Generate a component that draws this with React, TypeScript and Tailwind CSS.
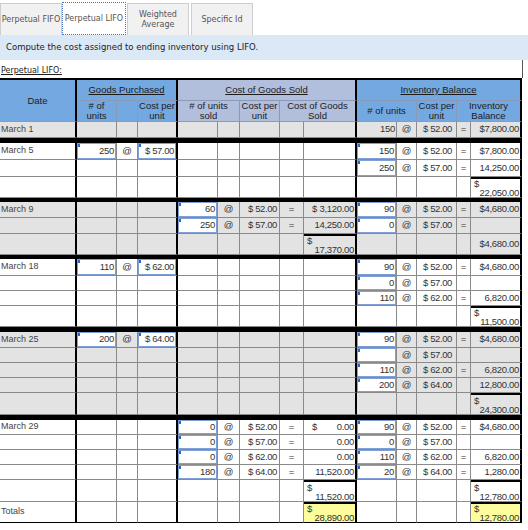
import React from "react";

const GRID =
  "grid grid-cols-[77px_40px_21px_40px_40px_22px_40px_24px_53px_40px_20px_40px_14px_51px]";

type Row = { h: string; cells: string[] };
type Group = { gray: boolean; rows: Row[] };

const E = (n: number) => Array.from({ length: n }, () => "");

const groups: Group[] = [
  {
    gray: true,
    rows: [
      { h: "h-[16px]", cells: ["D:March 1", ...E(8), "R:150", "@", "C:$ 52.00", "=", "R:$7,800.00"] },
    ],
  },
  {
    gray: false,
    rows: [
      { h: "h-[17px]", cells: ["D:March 5", "I:250", "@", "J:$ 57.00", ...E(5), "I:150", "@", "C:$ 52.00", "=", "R:$7,800.00"] },
      { h: "h-[17px]", cells: [...E(9), "I:250", "@", "C:$ 57.00", "=", "R:14,250.00"] },
      { h: "h-[21px]", cells: [...E(13), "T:22,050.00"] },
    ],
  },
  {
    gray: true,
    rows: [
      { h: "h-[16px]", cells: ["D:March 9", "", "", "", "I:60", "@", "C:$ 52.00", "=", "R:$ 3,120.00", "I:90", "@", "C:$ 52.00", "=", "R:$4,680.00"] },
      { h: "h-[16px]", cells: ["", "", "", "", "I:250", "@", "C:$ 57.00", "=", "R:14,250.00", "I:0", "@", "C:$ 57.00", "=", ""] },
      { h: "h-[21px]", cells: [...E(8), "T:17,370.00", "", "", "", "", "R:$4,680.00"] },
    ],
  },
  {
    gray: false,
    rows: [
      { h: "h-[17px]", cells: ["D:March 18", "I:110", "@", "J:$ 62.00", ...E(5), "I:90", "@", "C:$ 52.00", "=", "R:$4,680.00"] },
      { h: "h-[15px]", cells: [...E(9), "I:0", "@", "C:$ 57.00", "", ""] },
      { h: "h-[15px]", cells: [...E(9), "I:110", "@", "C:$ 62.00", "=", "R:6,820.00"] },
      { h: "h-[21px]", cells: [...E(13), "T:11,500.00"] },
    ],
  },
  {
    gray: true,
    rows: [
      { h: "h-[16px]", cells: ["D:March 25", "I:200", "@", "J:$ 64.00", ...E(5), "I:90", "@", "C:$ 52.00", "=", "R:$4,680.00"] },
      { h: "h-[15px]", cells: [...E(9), "I:", "@", "C:$ 57.00", "", ""] },
      { h: "h-[15px]", cells: [...E(9), "I:110", "@", "C:$ 62.00", "=", "R:6,820.00"] },
      { h: "h-[15px]", cells: [...E(9), "I:200", "@", "C:$ 64.00", "", "R:12,800.00"] },
      { h: "h-[22px]", cells: [...E(13), "T:24,300.00"] },
    ],
  },
  {
    gray: false,
    rows: [
      { h: "h-[15px]", cells: ["D:March 29", "", "", "", "I:0", "@", "C:$ 52.00", "=", "S:0.00", "I:90", "@", "C:$ 52.00", "=", "R:$4,680.00"] },
      { h: "h-[15px]", cells: ["", "", "", "", "I:0", "@", "C:$ 57.00", "=", "R:0.00", "I:0", "@", "C:$ 57.00", "", ""] },
      { h: "h-[15px]", cells: ["", "", "", "", "I:0", "@", "C:$ 62.00", "=", "R:0.00", "I:110", "@", "C:$ 62.00", "=", "R:6,820.00"] },
      { h: "h-[15px]", cells: ["", "", "", "", "I:180", "@", "C:$ 64.00", "=", "R:11,520.00", "I:20", "@", "C:$ 64.00", "=", "R:1,280.00"] },
      { h: "h-[22px]", cells: [...E(8), "T:11,520.00", "", "", "", "", "T:12,780.00"] },
      { h: "h-[21px]", cells: ["D:Totals", ...E(7), "Y:28,890.00", "", "", "", "", "Y:12,780.00"] },
    ],
  },
];

const BLACK_COLS = [0, 3, 8, 13];

function CellContent({ s, col }: { s: string; col: number }) {
  if (!s) return null;
  if (s === "@") return <div className="h-full flex items-center justify-center">@</div>;
  if (s === "=") return <div className="h-full flex items-center justify-center">=</div>;
  const k = s.slice(0, 2);
  const v = s.slice(2);
  if (k === "D:")
    return <div className="h-full flex items-center pl-[1px] text-[9px] text-[#444]">{v}</div>;
  if (k === "R:")
    return <div className="h-full flex items-center justify-end pr-[1px] tracking-[-0.3px]">{v}</div>;
  if (k === "C:")
    return (
      <div
        className={`h-full flex items-center justify-end tracking-[-0.4px] whitespace-pre ${
          col === 11 ? "pr-[4px]" : "pr-[2px]"
        }`}
      >
        {v}
      </div>
    );
  if (k === "S:")
    return (
      <div className="h-full flex items-center justify-between pl-[8px] pr-[1px] tracking-[-0.3px]">
        <span>$</span>
        <span>{v}</span>
      </div>
    );
  if (k === "I:" || k === "J:")
    return (
      <div
        className={`relative h-full w-full border border-[#7ea0d6] bg-white flex items-center justify-end pr-[1px] whitespace-pre ${
          k === "J:" ? "tracking-[-0.4px]" : "tracking-[-0.3px]"
        }`}
      >
        <span className="absolute left-0 top-0 w-[2px] h-[3px] bg-[#2a68d0]" />
        {v}
      </div>
    );
  if (k === "T:" || k === "Y:")
    return (
      <div
        className={`h-full border-t-2 border-black flex flex-col justify-center leading-[9px] pl-[3px] pr-[1px] tracking-[-0.3px] ${
          k === "Y:" ? "bg-[#fdfd9e]" : ""
        }`}
      >
        <span>$</span>
        <span className="text-right">{v}</span>
      </div>
    );
  return null;
}

function DataRow({ row, gray, last }: { row: Row; gray: boolean; last: boolean }) {
  return (
    <div className={`${GRID} ${row.h} ${gray ? "bg-[#e3e3e3]" : "bg-white"}`}>
      {row.cells.map((s, i) => (
        <div
          key={i}
          className={`border-b ${last ? "border-b-black" : "border-b-[#8a8a8a]"} ${
            BLACK_COLS.includes(i) ? "border-r-2 border-r-black" : "border-r border-r-[#8a8a8a]"
          } overflow-hidden`}
        >
          <CellContent s={s} col={i} />
        </div>
      ))}
    </div>
  );
}

function Header() {
  const blue = "bg-[#74a8e0]";
  const lav = "bg-[#b1bedc]";
  const b = "border-b border-b-[#8a9ab8]";
  const g = "border-r border-r-[#8a9ab8]";
  const k = "border-r-2 border-r-black";
  const c = "flex items-center justify-center text-center leading-[10px]";
  return (
    <div className={`${GRID} grid-rows-[21px_21px] border-t-2 border-black text-[9.5px] text-[#1c1c1c]`}>
      <div className={`row-span-2 ${blue} ${b} ${k} ${c}`}>Date</div>
      <div className={`col-span-3 ${blue} ${b} ${k} ${c}`}>
        <span className="underline">Goods Purchased</span>
      </div>
      <div className={`col-span-5 ${lav} ${b} ${k} ${c}`}>
        <span className="underline">Cost of Goods Sold</span>
      </div>
      <div className={`col-span-5 ${blue} ${b} ${k} ${c}`}>
        <span className="underline">Inventory Balance</span>
      </div>
      <div className={`${blue} ${b} ${g} ${c}`}>
        # of
        <br />
        units
      </div>
      <div className={`${blue} ${b} ${g}`} />
      <div className={`${blue} ${b} ${k} ${c}`}>
        Cost per
        <br />
        unit
      </div>
      <div className={`col-span-2 ${lav} ${b} ${g} ${c}`}>
        # of units
        <br />
        sold
      </div>
      <div className={`${lav} ${b} ${g} ${c}`}>
        Cost per
        <br />
        unit
      </div>
      <div className={`col-span-2 ${lav} ${b} ${k} ${c}`}>
        Cost of Goods
        <br />
        Sold
      </div>
      <div className={`col-span-2 ${blue} ${b} ${g} ${c}`}># of units</div>
      <div className={`${blue} ${b} ${g} ${c}`}>
        Cost per
        <br />
        unit
      </div>
      <div className={`col-span-2 ${blue} ${b} ${k} ${c}`}>
        Inventory
        <br />
        Balance
      </div>
    </div>
  );
}

export default function App() {
  return (
    <div className="w-[528px] h-[530px] bg-white overflow-hidden">
      <div className="flex items-end h-[35px] font-['DejaVu_Sans',Verdana,sans-serif] text-[8px] text-[#555]">
        <div className="w-[62px] h-[32px] bg-[#f1f1f1] border border-b-0 border-[#cdcdcd] flex items-center justify-center whitespace-nowrap">
          Perpetual FIFO
        </div>
        <div className="w-[64px] h-[33px] bg-white border border-dotted border-[#4a72c0] flex items-center justify-center whitespace-nowrap">
          Perpetual LIFO
        </div>
        <div className="ml-[1px] w-[62px] h-[32px] bg-[#f1f1f1] border border-b-0 border-[#cdcdcd] flex items-center justify-center text-center leading-[10px]">
          Weighted
          <br />
          Average
        </div>
        <div className="ml-[2px] w-[62px] h-[32px] bg-[#f1f1f1] border border-b-0 border-[#cdcdcd] flex items-center justify-center">
          Specific Id
        </div>
      </div>
      <div className="h-[25px] bg-[#dbe8f6] flex items-center pl-[6px] font-['DejaVu_Sans',Verdana,sans-serif] text-[8.5px] text-[#222]">
        Compute the cost assigned to ending inventory using LIFO.
      </div>
      <div className="w-[523px] h-[18px] pt-[5px] pl-[1px] border-r border-r-[#555] font-['DejaVu_Sans',Verdana,sans-serif] text-[8px] text-[#222]">
        <span className="underline">Perpetual LIFO:</span>
      </div>
      <div className="w-[522px] font-['Liberation_Sans',Arial,sans-serif] text-[9.5px] text-[#333]">
        <Header />
        {groups.map((g, gi) => (
          <React.Fragment key={gi}>
            {gi > 0 && (
              <div className={`${gi === 1 || gi === 5 || gi === 4 ? "h-[5px]" : "h-[4px]"} bg-black`} />
            )}
            {g.rows.map((r, ri) => (
              <DataRow
                key={ri}
                row={r}
                gray={g.gray}
                last={gi === groups.length - 1 && ri === g.rows.length - 1}
              />
            ))}
          </React.Fragment>
        ))}
      </div>
    </div>
  );
}
